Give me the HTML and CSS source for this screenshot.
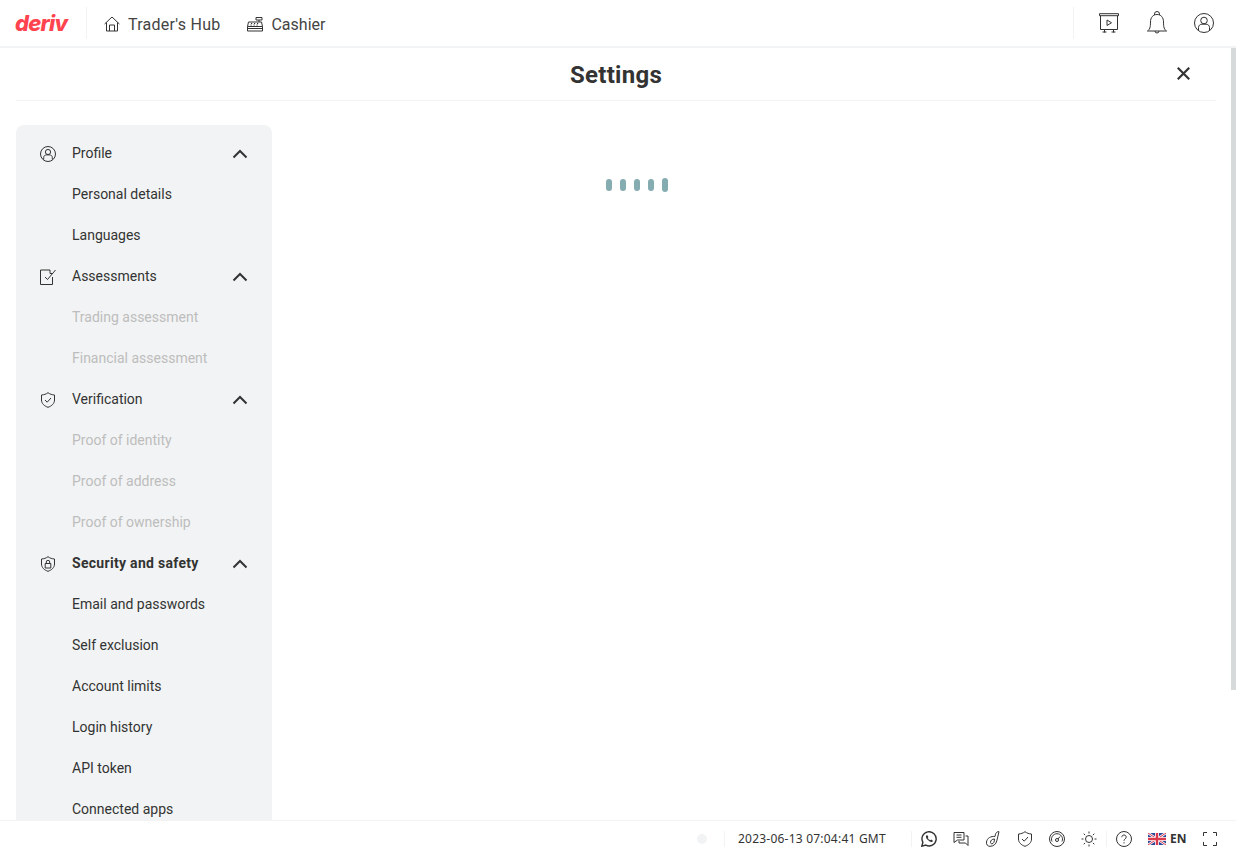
FILE: index.html
```html
<!DOCTYPE html>
<html lang="en">
<head>
    <meta charset="UTF-8">
    <title>Settings</title>
    <link rel="stylesheet" href="styles.css">
</head>
<body>
<div class="app">
    <header class="topbar">
        <span class="logo">deriv</span>
        <span class="divider logo-divider"></span>
        <a class="nav-link home-link">
            <svg class="icon" viewBox="0 0 16 16"><path d="M.6 8 8 1l7.400 7M2.500 6.500v8.500h11V6.500M5.500 15V9h5v6"/></svg>
            Trader's Hub
        </a>
        <a class="nav-link">
            <svg class="icon" viewBox="0 0 16 16"><path d="M.5 10.500h15v4.500H.5zM.5 10.500l1-4.500h13l1 4.500M9 1.500h6v2.500H9zM12 4v2M.5 12.500h15M4 7.500h1.200M7 7.500h1.200M10 7.500h1.200M3.500 9h1.200M6.500 9h1.200M9.500 9h1.200"/></svg>
            Cashier
        </a>
        <div class="topbar-right">
            <span class="divider"></span>
            <svg class="icon large tutorial" viewBox="0 0 20 20"><path d="M.5 .7h19v2H.5zM1.500 2.700v13.800h17V2.700M8 7v5.500l4.500-2.750zM5.500 16.500V19.500M14.500 16.500V19.500M3.500 19h4M12.500 19h4"/></svg>
            <svg class="icon bell" viewBox="0 0 20 24"><path d="M7.500 4V3a2.500 2.500 0 0 1 5 0v1M10 3.500c4 0 6.500 3 6.500 7.500 0 5.500.8 7.500 3 9H.5c2.200-1.500 3-3.500 3-9C3.500 6.500 6 3.500 10 3.500zM8 20a2 2 0 0 0 4 0"/></svg>
            <svg class="icon large user" viewBox="0 0 20 20"><circle cx="10" cy="10" r="9.500"/><circle cx="10" cy="7.500" r="3.300"/><path d="M4.500 17v-2.500c0-2 1.500-3.300 3.500-3.300h4c2 0 3.500 1.300 3.500 3.300V17"/></svg>
        </div>
    </header>

    <main class="page">
        <div class="page-title">
            <h1>Settings</h1>
            <svg class="close" viewBox="0 0 12 12"><path d="M.7.7l10.600 10.600M11.300.7.700 11.300"/></svg>
        </div>
        <div class="page-body">
            <nav class="sidebar">
                <div class="row head">
                    <svg class="icon" viewBox="0 0 16 16"><circle cx="8" cy="8" r="7.500"/><circle cx="8" cy="6" r="2.600"/><path d="M3.700 13.500v-2c0-1.500 1.200-2.600 2.700-2.600h3.200c1.500 0 2.700 1.100 2.700 2.600v2"/></svg>
                    <span class="label">Profile</span>
                    <svg class="chevron" viewBox="0 0 16 10"><path d="M1.500 8.500 8 2l6.500 6.500"/></svg>
                </div>
                <div class="row sub">Personal details</div>
                <div class="row sub">Languages</div>

                <div class="row head">
                    <svg class="icon" viewBox="0 0 16 16"><path d="M10 1H.5v14.500h12V8M10 1v3.500h2.500M5 8l2.500 2.500L15.500 1"/></svg>
                    <span class="label">Assessments</span>
                    <svg class="chevron" viewBox="0 0 16 10"><path d="M1.500 8.500 8 2l6.500 6.500"/></svg>
                </div>
                <div class="row sub off">Trading assessment</div>
                <div class="row sub off">Financial assessment</div>

                <div class="row head">
                    <svg class="icon" viewBox="0 0 16 16"><path d="M8 .7c2 1.500 4 2.100 6.500 2.300v5c0 3.500-2.700 6-6.500 7.300C4.200 14 1.500 11.500 1.500 8V3C4 2.800 6 2.200 8 .7zM5 8l2.200 2.200L11 6"/></svg>
                    <span class="label">Verification</span>
                    <svg class="chevron" viewBox="0 0 16 10"><path d="M1.500 8.500 8 2l6.500 6.500"/></svg>
                </div>
                <div class="row sub off">Proof of identity</div>
                <div class="row sub off">Proof of address</div>
                <div class="row sub off">Proof of ownership</div>

                <div class="row head active">
                    <svg class="icon" viewBox="0 0 16 16"><path d="M8 .7c2 1.500 4 2.100 6.500 2.300v5c0 3.500-2.700 6-6.500 7.300C4.200 14 1.500 11.500 1.500 8V3C4 2.800 6 2.200 8 .7zM5.200 7.500h5.600v4.500H5.200zM6.300 7.500V6a1.700 1.700 0 0 1 3.400 0v1.500"/></svg>
                    <span class="label">Security and safety</span>
                    <svg class="chevron" viewBox="0 0 16 10"><path d="M1.500 8.500 8 2l6.500 6.500"/></svg>
                </div>
                <div class="row sub">Email and passwords</div>
                <div class="row sub">Self exclusion</div>
                <div class="row sub">Account limits</div>
                <div class="row sub">Login history</div>
                <div class="row sub">API token</div>
                <div class="row sub">Connected apps</div>
            </nav>
            <section class="content">
                <div class="loader">
                    <span></span><span></span><span></span><span></span><span class="tall"></span>
                </div>
            </section>
        </div>
    </main>

    <footer class="footer">
        <span class="status-dot"></span>
        <span class="divider"></span>
        <span class="clock">2023-06-13 07:04:41 GMT</span>
        <span class="divider clock-divider"></span>
        <div class="footer-icons">
            <svg class="icon" viewBox="0 0 16 16"><path class="bold" d="M.8 15.200 1.900 11.300A7.100 7.100 0 1 1 4.800 14.100z"/><path class="thick" d="M5.500 4.300c-1.200 1-.6 3 1.400 4.800s3.700 2.500 4.700 1.300c.3-.4.300-.8 0-1l-1.300-.9-1 .7C7.900 8.600 7.200 7.800 6.700 7l.7-1-1-1.700z"/></svg>
            <svg class="icon" viewBox="0 0 16 16"><path d="M1 1.500h10v7.500H4.500L1 11.500zM3.500 4h5M3.500 6.300h5M12.500 5H15v9.500l-2.500-2.500H6v-2"/></svg>
            <svg class="icon" viewBox="0 0 16 16"><path d="M13 .7c-1 .2-2 1-2.500 2.500L10 5.500C6 5 2 7 1.500 11c-.3 2.500 1 4.300 3.500 4.300 3.500 0 6-2 6.800-5.500L14 .7zM9.500 8c-2.500 0-4 1.500-4 3.300 0 1 .6 1.500 1.400 1.500 1.600 0 2.600-2 2.600-4.800z"/></svg>
            <svg class="icon" viewBox="0 0 16 16"><path d="M8 .7c2 1.500 4 2.100 6.500 2.300v5c0 3.500-2.700 6-6.500 7.300C4.200 14 1.500 11.500 1.500 8V3C4 2.800 6 2.200 8 .7zM5 8l2.200 2.200L11 6"/></svg>
            <svg class="icon" viewBox="0 0 16 16"><circle cx="8" cy="8" r="7.500"/><path d="M3 10.500A5.500 5.500 0 1 1 13 10.500"/><circle cx="8" cy="9" r="1.500"/><path d="M9 8l2-2.500"/></svg>
            <svg class="icon" viewBox="0 0 16 16"><circle cx="8" cy="8" r="3.500"/><path d="M8 .5v2M8 13.500v2M.5 8h2M13.500 8h2M2.700 2.700l1.400 1.400M11.900 11.900l1.400 1.400M2.700 13.300l1.400-1.400M11.900 4.100l1.400-1.400"/></svg>
        </div>
        <span class="divider help-divider"></span>
        <svg class="icon help" viewBox="0 0 16 16"><circle cx="8" cy="8" r="7.500"/><path d="M5.800 6.200C5.800 4.900 6.800 4 8 4s2.200.9 2.200 2.100c0 1.800-2.200 1.700-2.200 3.700M8 11.200v1.200"/></svg>
        <div class="lang">
            <svg class="flag" viewBox="0 0 18 12">
                <rect width="18" height="12" fill="#2b4a9b"/>
                <path d="M0 0l18 12M18 0 0 12" stroke="#fff" stroke-width="2.400"/>
                <path d="M0 0l18 12M18 0 0 12" stroke="#d8394b" stroke-width="1"/>
                <path d="M9 0v12M0 6h18" stroke="#fff" stroke-width="4"/>
                <path d="M9 0v12M0 6h18" stroke="#d8394b" stroke-width="2.400"/>
            </svg>
            <span>EN</span>
        </div>
        <svg class="icon fullscreen" viewBox="0 0 14 14"><path d="M.5 4V.5H4M10 .5h3.500V4M13.500 10v3.500H10M4 13.500H.5V10"/></svg>
    </footer>

    <div class="scrollbar"></div>
</div>
</body>
</html>
```

FILE: styles.css
```css
* { box-sizing: border-box; }
html, body { margin: 0; height: 100%; overflow: hidden; }
body { font-family: Roboto, "Noto Sans", sans-serif; color: #333; background: #fff; font-size: 14px; }

.app { display: flex; flex-direction: column; height: 100vh; position: relative; }

svg { display: block; flex-shrink: 0; }
.icon { width: 16px; height: 16px; fill: none; stroke: #333; stroke-width: 1; }
.icon.large { width: 20px; height: 20px; }
.icon.bell { width: 20px; height: 24px; }
.divider { display: block; width: 1px; height: 32px; background: #f2f3f4; flex-shrink: 0; }

/* top bar */
.topbar { display: flex; align-items: center; height: 48px; flex-shrink: 0; border-bottom: 2px solid #f2f3f4; padding-left: 15px; }
.logo { width: 53px; font-family: Inter, "Liberation Sans", sans-serif; font-size: 22px; font-weight: 800; font-style: italic; color: #ff444f; letter-spacing: -0.8px; line-height: 1; }
.logo-divider { margin-left: 18px; margin-right: 17px; }
.nav-link { display: flex; align-items: center; gap: 8px; font-size: 16px; color: #444; padding-top: 2px; }
.home-link { margin-right: 27px; letter-spacing: 0.25px; }
.topbar-right { display: flex; align-items: center; margin-left: auto; padding-right: 22px; }
.tutorial { margin-left: 25px; }
.bell { margin-left: 28px; }
.user { margin-left: 27px; }

/* settings */
.page { flex: 1; min-height: 0; overflow: hidden; padding: 0 20px 0 16px; }
.page-title { display: flex; align-items: center; justify-content: center; height: 53px; border-bottom: 1px solid #f2f3f4; position: relative; }
.page-title h1 { margin: 0; padding-top: 2px; font-size: 24px; font-weight: 700; letter-spacing: 0.3px; }
.close { position: absolute; right: 26px; top: 19px; width: 13px; height: 13px; fill: none; stroke: #333; stroke-width: 2; }
.page-body { display: flex; align-items: flex-start; padding-top: 24px; }

.sidebar { width: 256px; flex-shrink: 0; background: #f2f3f4; border-radius: 8px; padding: 8px 0; }
.row { display: flex; align-items: center; height: 41px; padding: 0 24px; }
.row .label { flex: 1; margin-left: 16px; padding-bottom: 2px; }
.row.sub { padding-left: 56px; padding-bottom: 2px; }
.row.off { color: #bdbdbd; }
.row.active .label { font-weight: 700; letter-spacing: 0.3px; }
.chevron { width: 16px; height: 10px; fill: none; stroke: #333; stroke-width: 2; }

.content { width: 730px; flex-shrink: 0; padding-top: 53px; }
.loader { display: flex; justify-content: center; align-items: center; gap: 8px; height: 14px; }
.loader span { width: 6px; height: 12px; border-radius: 3px; background: #85acb0; }
.loader .tall { height: 14px; }

/* footer */
.footer { display: flex; align-items: center; height: 36px; flex-shrink: 0; border-top: 1px solid #f2f3f4; padding-left: 697px; }
.footer .divider { height: 16px; }
.status-dot { width: 10px; height: 10px; border-radius: 50%; background: #f2f3f4; margin-right: 17px; }
.clock { font-family: "Noto Sans", sans-serif; font-size: 12px; margin-left: 13px; width: 148px; white-space: nowrap; letter-spacing: 0.22px; color: #333; }
.clock-divider { margin-left: 25px; }
.footer-icons { display: flex; gap: 16px; margin-left: 9px; }
.bold { stroke-width: 1.400; }
.thick { fill: #333; stroke: none; }
.help-divider { margin-left: 9px; }
.help { margin-left: 9px; }
.lang { display: flex; align-items: center; gap: 4px; margin-left: 16px; font-family: "Noto Sans", sans-serif; font-size: 12px; font-weight: 700; }
.flag { width: 18px; height: 12px; }
.fullscreen { width: 14px; height: 14px; margin-left: 17px; }

.scrollbar { position: absolute; right: 0; top: 48px; width: 5px; height: 642px; background: #d6dadb; }
```
